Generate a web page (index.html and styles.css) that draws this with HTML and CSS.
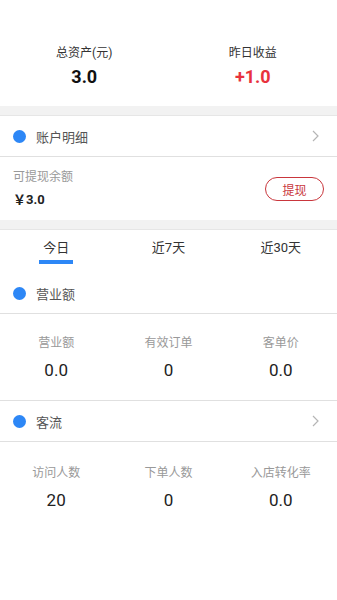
FILE: index.html
```html
<!DOCTYPE html>
<html lang="zh-CN">
<head>
    <meta charset="UTF-8">
    <meta name="viewport" content="width=device-width, initial-scale=1.0">
    <title>我的资产</title>
    <link rel="stylesheet" href="styles.css">
</head>
<body>
    <div class="summary">
        <div class="summary-item">
            <div class="summary-label">总资产(元)</div>
            <div class="summary-value">3.0</div>
        </div>
        <div class="summary-item">
            <div class="summary-label">昨日收益</div>
            <div class="summary-value red">+1.0</div>
        </div>
    </div>

    <div class="gap"></div>

    <div class="row">
        <span class="dot"></span>
        <span class="row-title">账户明细</span>
        <svg class="arrow" width="8" height="12" viewBox="0 0 8 12"><path d="M1 1l5 5-5 5" fill="none" stroke="#b5b5b5" stroke-width="1.2"/></svg>
    </div>

    <div class="withdraw">
        <div>
            <div class="withdraw-label">可提现余额</div>
            <div class="withdraw-value">￥3.0</div>
        </div>
        <button class="withdraw-btn">提现</button>
    </div>

    <div class="gap"></div>

    <div class="tabs">
        <div class="tab active">今日</div>
        <div class="tab">近7天</div>
        <div class="tab">近30天</div>
    </div>

    <div class="row first">
        <span class="dot"></span>
        <span class="row-title">营业额</span>
    </div>
    <div class="stats">
        <div class="stat">
            <div class="stat-label">营业额</div>
            <div class="stat-value">0.0</div>
        </div>
        <div class="stat">
            <div class="stat-label">有效订单</div>
            <div class="stat-value">0</div>
        </div>
        <div class="stat">
            <div class="stat-label">客单价</div>
            <div class="stat-value">0.0</div>
        </div>
    </div>

    <div class="row">
        <span class="dot"></span>
        <span class="row-title">客流</span>
        <svg class="arrow" width="8" height="12" viewBox="0 0 8 12"><path d="M1 1l5 5-5 5" fill="none" stroke="#b5b5b5" stroke-width="1.2"/></svg>
    </div>
    <div class="stats plain">
        <div class="stat">
            <div class="stat-label">访问人数</div>
            <div class="stat-value">20</div>
        </div>
        <div class="stat">
            <div class="stat-label">下单人数</div>
            <div class="stat-value">0</div>
        </div>
        <div class="stat">
            <div class="stat-label">入店转化率</div>
            <div class="stat-value">0.0</div>
        </div>
    </div>
</body>
</html>
```

FILE: styles.css
```css
body {
    margin: 0;
    background-color: #fff;
    font-family: Roboto, "Noto Sans CJK SC", sans-serif;
    color: #333;
}
.summary {
    display: flex;
    height: 106px;
    padding-top: 43px;
    box-sizing: border-box;
}
.summary-item {
    flex: 1;
    text-align: center;
}
.summary-label {
    font-size: 12px;
    line-height: 20px;
    color: #333;
}
.summary-value {
    margin-top: 1px;
    font-size: 18px;
    font-weight: bold;
    line-height: 26px;
    color: #111;
}
.red {
    color: #e8323d;
}
.gap {
    height: 9px;
    background-color: #f2f2f2;
    border-bottom: 1px solid #e6e6e6;
}
.row {
    display: flex;
    align-items: center;
    height: 40px;
    padding: 0 16px 0 13px;
    border-bottom: 1px solid #e0e0e0;
}
.row.first {
    margin-top: 9px;
}
.dot {
    width: 13px;
    height: 13px;
    border-radius: 50%;
    background-color: #2d87f6;
}
.row-title {
    flex: 1;
    margin-left: 10px;
    font-size: 13px;
    color: #555;
}
.arrow {
    margin-right: 1px;
}
.withdraw {
    display: flex;
    align-items: center;
    justify-content: space-between;
    height: 63px;
    padding: 0 13px;
}
.withdraw-label {
    font-size: 12px;
    line-height: 18px;
    color: #999;
}
.withdraw-value {
    margin-top: 4px;
    font-size: 13px;
    font-weight: bold;
    line-height: 20px;
    color: #222;
}
.withdraw-btn {
    width: 59px;
    height: 24px;
    margin-top: 1px;
    padding: 0;
    border: 1px solid #c9363c;
    border-radius: 12px;
    background-color: #fff;
    font-family: inherit;
    font-size: 12px;
    color: #c9363c;
}
.tabs {
    display: flex;
    height: 34px;
}
.tab {
    flex: 1;
    position: relative;
    padding-top: 9px;
    text-align: center;
    font-size: 13px;
    line-height: 18px;
    color: #333;
}
.tab.active::after {
    content: "";
    position: absolute;
    left: 50%;
    bottom: 0;
    width: 34px;
    height: 4px;
    margin-left: -17px;
    background-color: #2d87f6;
}
.stats {
    display: flex;
    padding: 21px 0 19px;
    border-bottom: 1px solid #e0e0e0;
}
.stats.plain {
    border-bottom: none;
    padding-top: 23px;
}
.stat {
    flex: 1;
    text-align: center;
}
.stat-label {
    font-size: 12px;
    line-height: 17px;
    color: #999;
}
.stat-value {
    margin-top: 7px;
    font-size: 17px;
    line-height: 22px;
    color: #222;
}
```
